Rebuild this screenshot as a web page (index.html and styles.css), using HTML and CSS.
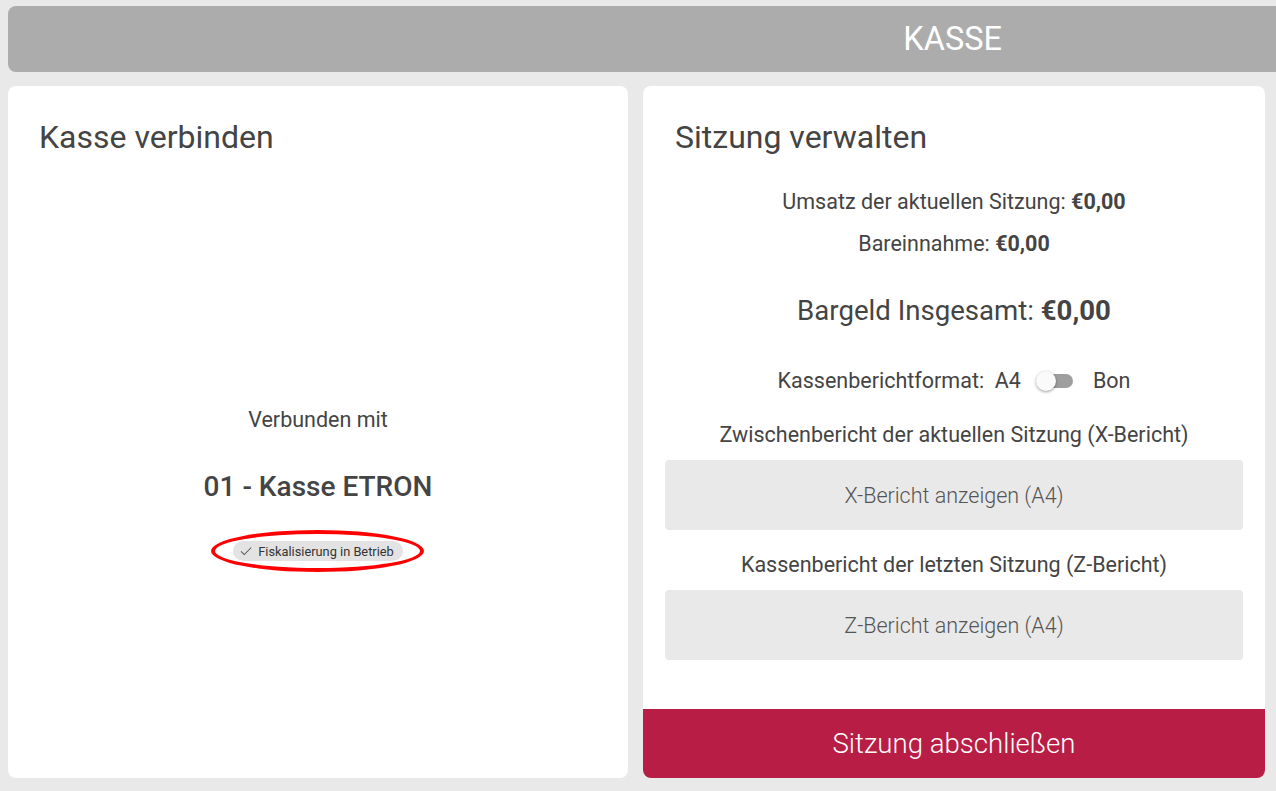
FILE: index.html
```html
<!DOCTYPE html>
<html lang="de">
<head>
  <meta charset="UTF-8">
  <title>Kasse</title>
  <link rel="stylesheet" href="styles.css">
</head>
<body>
  <header class="topbar">KASSE</header>

  <main class="columns">
    <section class="card connect">
      <h2 class="card-title">Kasse verbinden</h2>
      <p class="connected-label">Verbunden mit</p>
      <p class="register-name">01 - Kasse ETRON</p>
      <div class="badge-wrap">
        <span class="badge">
          <svg class="check" viewBox="0 0 24 24" width="14" height="14">
            <path d="M3.5 12.5l5.5 5.5L21 6" fill="none" stroke="#555" stroke-width="1.8"/>
          </svg>
          Fiskalisierung in Betrieb
        </span>
        <span class="highlight"></span>
      </div>
    </section>

    <section class="card session">
      <h2 class="card-title">Sitzung verwalten</h2>
      <p class="stat first">Umsatz der aktuellen Sitzung: <b>€0,00</b></p>
      <p class="stat">Bareinnahme: <b>€0,00</b></p>
      <p class="total">Bargeld Insgesamt: <b>€0,00</b></p>

      <div class="format-row">
        <span>Kassenberichtformat:&nbsp; A4</span>
        <span class="switch"><span class="knob"></span></span>
        <span>Bon</span>
      </div>

      <p class="report-label">Zwischenbericht der aktuellen Sitzung (X-Bericht)</p>
      <button class="report-btn">X-Bericht anzeigen (A4)</button>

      <p class="report-label second">Kassenbericht der letzten Sitzung (Z-Bericht)</p>
      <button class="report-btn">Z-Bericht anzeigen (A4)</button>

      <button class="close-btn">Sitzung abschließen</button>
    </section>
  </main>
</body>
</html>
```

FILE: styles.css
```css
* {
  box-sizing: border-box;
}
body {
  margin: 0;
  padding: 6px 0 0 8px;
  height: 791px;
  overflow: hidden;
  background: #e9e9e9;
  font-family: Roboto, "Liberation Sans", sans-serif;
  color: #444;
}
p {
  margin: 0;
}
.topbar {
  height: 66px;
  background: #acacac;
  border-radius: 8px 0 0 8px;
  color: #fff;
  font-size: 32.5px;
  line-height: 66px;
  text-align: right;
  padding-right: 274px;
}
.columns {
  display: grid;
  grid-template-columns: 620px 622px;
  gap: 15px;
  margin-top: 14px;
  height: 692px;
}
.card {
  background: #fff;
  border-radius: 8px;
  padding-top: 31px;
  display: flex;
  flex-direction: column;
}
.card-title {
  margin: 0;
  font-size: 32px;
  font-weight: 400;
  line-height: 40px;
}
.connect {
  align-items: center;
}
.connect .card-title {
  align-self: flex-start;
  padding-left: 31px;
}
.connected-label {
  margin-top: 248px;
  font-size: 21.5px;
  line-height: 30px;
}
.register-name {
  margin-top: 34px;
  font-size: 28px;
  font-weight: 500;
  line-height: 36px;
}
.badge-wrap {
  position: relative;
  margin-top: 36px;
}
.badge {
  display: flex;
  align-items: center;
  gap: 5px;
  height: 20px;
  padding: 0 9px 0 6px;
  background: #e3e3e3;
  border-radius: 10px;
  font-size: 12.8px;
  color: #333;
}
.highlight {
  position: absolute;
  left: calc(50% - 107px);
  top: -11px;
  width: 213px;
  height: 42px;
  border: 4px solid #f00;
  border-radius: 50%;
}
.session {
  align-items: center;
  text-align: center;
}
.session .card-title {
  align-self: flex-start;
  padding-left: 32px;
}
.stat {
  font-size: 21.5px;
  line-height: 30px;
  margin-top: 12px;
}
.stat.first {
  margin-top: 30px;
}
.stat b,
.total b {
  font-weight: 700;
}
.total {
  font-size: 27.6px;
  line-height: 36px;
  margin-top: 34px;
}
.format-row {
  display: flex;
  align-items: center;
  gap: 18px;
  margin-top: 37px;
  font-size: 21.5px;
  line-height: 30px;
}
.switch {
  position: relative;
  width: 34px;
  height: 14px;
  background: #9e9e9e;
  border-radius: 7px;
  margin-right: 2px;
}
.knob {
  position: absolute;
  left: -3px;
  top: -3px;
  width: 20px;
  height: 20px;
  border-radius: 50%;
  background: #fafafa;
  box-shadow: 0 1px 3px rgba(0, 0, 0, 0.4);
}
.report-label {
  font-size: 21.5px;
  line-height: 30px;
  margin-top: 24px;
}
.report-label.second {
  margin-top: 20px;
}
.report-btn {
  align-self: stretch;
  margin: 10px 22px 0;
  height: 70px;
  border: 0;
  border-radius: 4px;
  background: #e9e9e9;
  color: #555;
  font-family: inherit;
  font-size: 21.5px;
  font-weight: 300;
}
.close-btn {
  align-self: stretch;
  margin-top: auto;
  height: 69px;
  border: 0;
  border-radius: 0 0 8px 8px;
  background: #b81e45;
  color: #fff;
  font-family: inherit;
  font-size: 27.6px;
  font-weight: 300;
}
```
